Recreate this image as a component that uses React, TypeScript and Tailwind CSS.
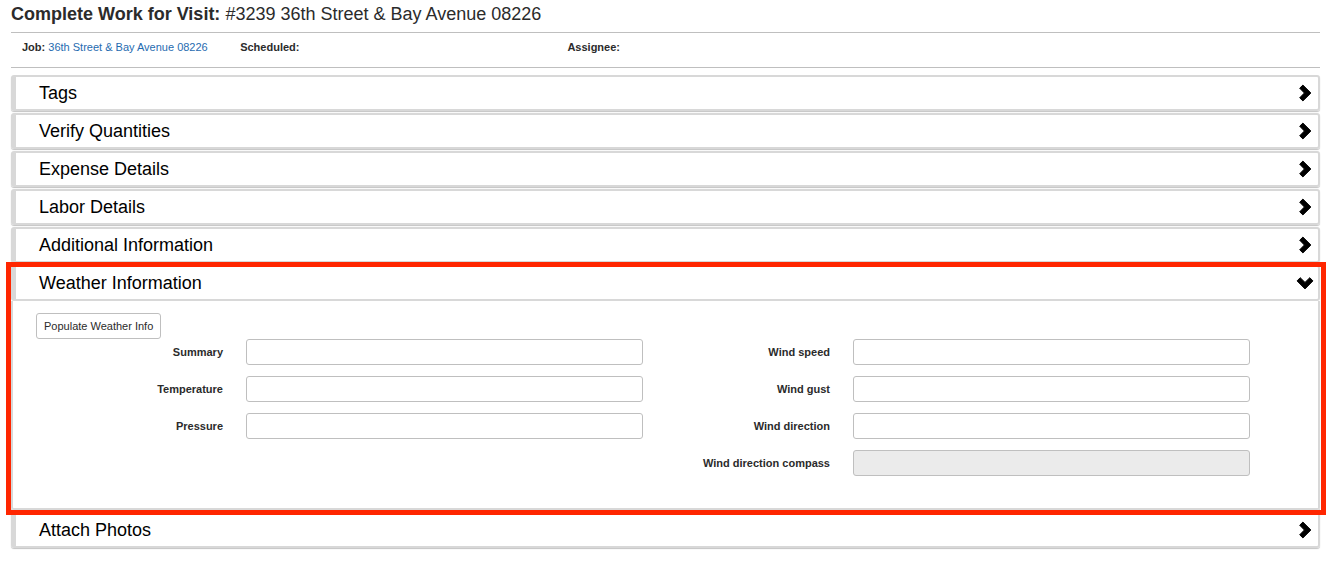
import { useState, type ReactNode } from "react";

function Chevron({ open }: { open: boolean }) {
  return (
    <svg
      viewBox="0 0 18 18"
      className={open ? "size-[18px] rotate-90" : "size-[18px]"}
      aria-hidden="true"
    >
      <path
        d="M3.7 4.2 6.9 1.1 14.9 9 6.9 16.9 3.7 13.8 8.4 9Z"
        fill="#000"
        stroke="#000"
        strokeWidth="1"
        strokeLinejoin="round"
      />
    </svg>
  );
}

type PanelProps = {
  title: string;
  initiallyOpen?: boolean;
  highlighted?: boolean;
  children?: ReactNode;
};

function Panel({ title, initiallyOpen = false, highlighted = false, children }: PanelProps) {
  const [open, setOpen] = useState(initiallyOpen);
  return (
    <section className="relative rounded-[3px] bg-white shadow-[0_1px_1px_#c4c4c4]">
      <h2>
        <button
          type="button"
          aria-expanded={open}
          onClick={() => setOpen(!open)}
          className="flex h-9 w-full items-center justify-between rounded-[3px] border-2 border-l-[5px] border-[#d8d8d8] pr-1 pl-[23px] text-left text-lg leading-5 text-black"
        >
          {title}
          <Chevron open={open} />
        </button>
      </h2>
      {open && children && (
        <div className="rounded-b-[3px] border-x-2 border-b-2 border-[#d8d8d8]">{children}</div>
      )}
      {highlighted && (
        <div className="pointer-events-none absolute -top-[3px] -right-1.5 -bottom-[5px] -left-[5px] z-10 border-5 border-[#ff2600]" />
      )}
    </section>
  );
}

type FieldProps = { id: string; label: string; disabled?: boolean };

function Field({ id, label, disabled = false }: FieldProps) {
  return (
    <div className="grid grid-cols-[187fr_397fr] items-center gap-[23px]">
      <label htmlFor={id} className="text-right font-bold whitespace-nowrap">
        {label}
      </label>
      <input
        id={id}
        type="text"
        disabled={disabled}
        className="h-[26px] w-full min-w-0 rounded-[3px] border border-[#bfbfbf] bg-white px-2 disabled:bg-[#ebebeb]"
      />
    </div>
  );
}

const leftFields: FieldProps[] = [
  { id: "summary", label: "Summary" },
  { id: "temperature", label: "Temperature" },
  { id: "pressure", label: "Pressure" },
];

const rightFields: FieldProps[] = [
  { id: "wind-speed", label: "Wind speed" },
  { id: "wind-gust", label: "Wind gust" },
  { id: "wind-direction", label: "Wind direction" },
  { id: "wind-compass", label: "Wind direction compass", disabled: true },
];

function WeatherForm() {
  return (
    <form className="pt-3 pr-[68px] pb-8 pl-[23px]" onSubmit={(e) => e.preventDefault()}>
      <button
        type="button"
        className="block h-[26px] rounded-[3px] border border-[#bfbfbf] bg-white px-[7px]"
      >
        Populate Weather Info
      </button>
      <div className="grid grid-cols-2">
        {[leftFields, rightFields].map((fields, i) => (
          <div key={i} className="flex flex-col gap-[11px]">
            {fields.map((field) => (
              <Field key={field.id} {...field} />
            ))}
          </div>
        ))}
      </div>
    </form>
  );
}

export default function App() {
  return (
    <main className="bg-white pr-[17px] pb-3 pl-[11px] font-['Liberation_Sans',Arial,sans-serif] text-[11px] leading-4 text-[#2b2b2b]">
      <h1 className="flex h-8 items-center pb-1 text-lg leading-5">
        <span>
          <strong>Complete Work for Visit:</strong> #3239 36th Street &amp; Bay Avenue 08226
        </span>
      </h1>
      <div className="grid h-9 grid-cols-[2fr_3fr_7fr] border-y border-[#bfbfbf] pt-1.5">
        <div className="pl-[11px] whitespace-nowrap">
          <strong>Job:</strong>{" "}
          <a href="#job" className="text-[#1f6bb0]">
            36th Street &amp; Bay Avenue 08226
          </a>
        </div>
        <div className="pl-[11px]">
          <strong>Scheduled:</strong>
        </div>
        <div className="pl-[11px]">
          <strong>Assignee:</strong>
        </div>
      </div>
      <div className="mt-[7px] flex flex-col gap-0.5">
        <Panel title="Tags" />
        <Panel title="Verify Quantities" />
        <Panel title="Expense Details" />
        <Panel title="Labor Details" />
        <Panel title="Additional Information" />
        <Panel title="Weather Information" initiallyOpen highlighted>
          <WeatherForm />
        </Panel>
        <Panel title="Attach Photos" />
      </div>
    </main>
  );
}
